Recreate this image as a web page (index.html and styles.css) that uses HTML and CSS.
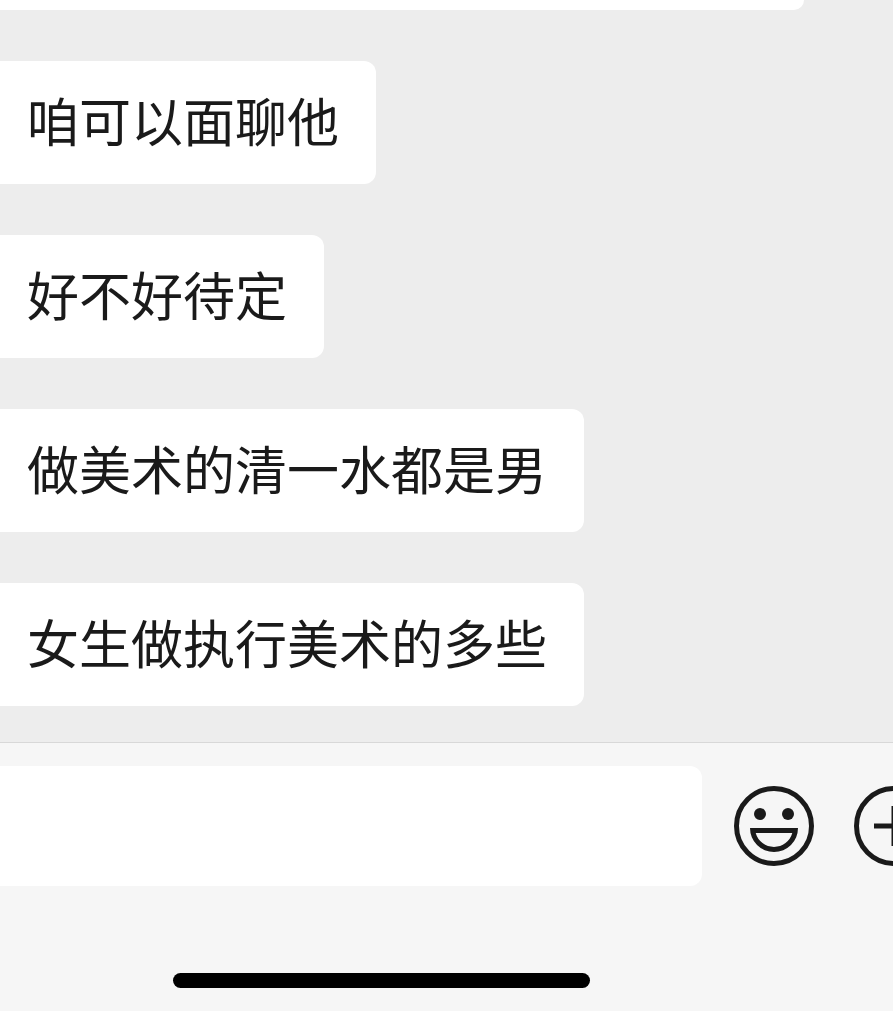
FILE: index.html
```
<!DOCTYPE html>
<html lang="zh-CN">
<head>
    <meta charset="UTF-8">
    <meta name="viewport" content="width=device-width, initial-scale=1.0">
    <link rel="stylesheet" href="styles.css">
</head>
<body>
    <main class="chat">
        <div class="bubble bubble-cut"></div>
        <div class="bubble">咱可以面聊他</div>
        <div class="bubble">好不好待定</div>
        <div class="bubble">做美术的清一水都是男</div>
        <div class="bubble">女生做执行美术的多些</div>
    </main>

    <footer class="composer">
        <form class="toolbar">
            <input type="text" class="message-input" aria-label="消息">
            <button type="button" class="icon-btn" aria-label="表情">
                <svg viewBox="0 0 80 80" fill="none" stroke="currentColor" stroke-width="5">
                    <circle cx="40" cy="40" r="37.5"/>
                    <g fill="currentColor" stroke="none">
                        <circle cx="26" cy="28" r="6"/>
                        <circle cx="54" cy="28" r="6"/>
                        <path fill-rule="evenodd" d="M16 42H64A24 24 0 0 1 16 42ZM21.7 47A19 19 0 0 0 58.3 47Z"/>
                    </g>
                </svg>
            </button>
            <button type="button" class="icon-btn" aria-label="更多">
                <svg viewBox="0 0 80 80" fill="none" stroke="currentColor" stroke-width="5">
                    <circle cx="40" cy="40" r="37.5"/>
                    <path d="M20 40H60M40 20V60"/>
                </svg>
            </button>
        </form>
        <div class="home-area">
            <div class="home-bar"></div>
        </div>
    </footer>
</body>
</html>
```
FILE: styles.css
```
* {
    box-sizing: border-box;
}

body {
    display: flex;
    flex-direction: column;
    height: 100vh;
    margin: 0;
    overflow: hidden;
    background-color: #ededed;
    color: #1a1a1a;
    font-family: "Noto Sans CJK SC", sans-serif;
}

.chat {
    flex: 1;
    display: flex;
    flex-direction: column;
    justify-content: flex-end;
    align-items: flex-start;
    gap: 51px;
    padding-bottom: 36px;
}

.bubble {
    padding: 21px 37px 27px 27px;
    background-color: #fff;
    border-radius: 0 12px 12px 0;
    font-size: 52px;
    line-height: 75px;
}

/* older message, scrolled almost out of view */
.bubble-cut {
    width: 90%;
    height: 10px;
    padding: 0;
    border-radius: 0 0 12px 0;
}

.composer {
    padding: 23px 0;
    border-top: 1px solid #d8d8d8;
    background-color: #f6f6f6;
    overflow: hidden;
}

.toolbar {
    display: flex;
    align-items: center;
    margin-right: -41px;
}

.message-input {
    flex: 1;
    min-width: 0;
    height: 120px;
    margin-right: 32px;
    padding: 0 27px;
    border: none;
    border-radius: 0 12px 12px 0;
    outline: none;
    background-color: #fff;
    color: inherit;
    font-family: inherit;
    font-size: 52px;
}

.icon-btn {
    flex: none;
    width: 80px;
    height: 80px;
    padding: 0;
    border: none;
    background: none;
    color: inherit;
    cursor: pointer;
}

.icon-btn + .icon-btn {
    margin-left: 40px;
}

.icon-btn svg {
    display: block;
}

.home-area {
    display: flex;
    justify-content: center;
    padding: 87px 130px 0 0;
}

.home-bar {
    width: 417px;
    height: 15px;
    border-radius: 8px;
    background-color: #000;
}
```
